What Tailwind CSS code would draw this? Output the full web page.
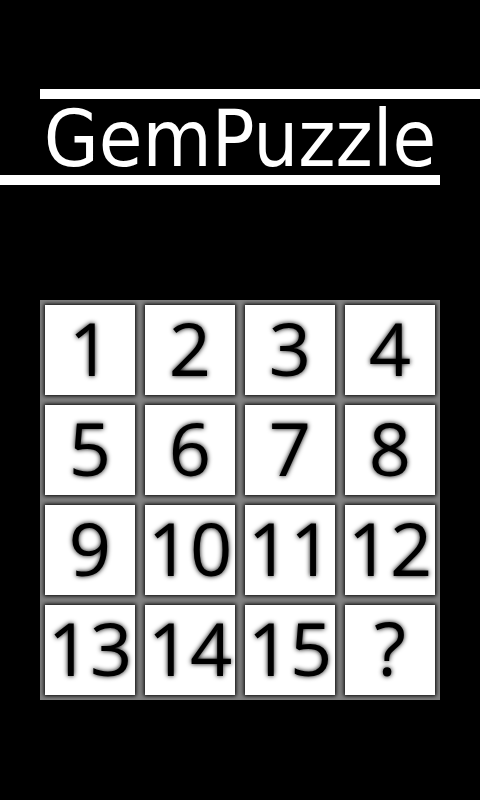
<!DOCTYPE html>
<html lang="en">
<head>
<meta charset="utf-8">
<meta name="viewport" content="width=device-width, initial-scale=1">
<title>GemPuzzle</title>
<script src="https://cdn.jsdelivr.net/npm/@tailwindcss/browser@4"></script>
</head>
<body class="min-h-screen overflow-x-hidden bg-black font-['Open_Sans',sans-serif]">
<header class="flex flex-col pt-[89px]">
  <div class="ml-10 h-[10px] bg-white"></div>
  <h1 class="h-[76px] text-center font-['DejaVu_Sans_Condensed','DejaVu_Sans',sans-serif] text-[79px] leading-[80px] whitespace-nowrap text-white">GemPuzzle</h1>
  <div class="mr-10 h-[10px] bg-white"></div>
</header>
<main class="px-10 pt-[115px] pb-[100px]">
  <div class="grid grid-cols-4 gap-[10px] bg-[#808080] p-[5px] text-[74px] leading-[84px] text-black">
    <button class="flex aspect-square min-w-0 items-center justify-center bg-white pb-[4px] shadow-[0_0_4px_1px_#000] [text-shadow:0_0_5px_#000]">1</button>
    <button class="flex aspect-square min-w-0 items-center justify-center bg-white pb-[4px] shadow-[0_0_4px_1px_#000] [text-shadow:0_0_5px_#000]">2</button>
    <button class="flex aspect-square min-w-0 items-center justify-center bg-white pb-[4px] shadow-[0_0_4px_1px_#000] [text-shadow:0_0_5px_#000]">3</button>
    <button class="flex aspect-square min-w-0 items-center justify-center bg-white pb-[4px] shadow-[0_0_4px_1px_#000] [text-shadow:0_0_5px_#000]">4</button>
    <button class="flex aspect-square min-w-0 items-center justify-center bg-white pb-[4px] shadow-[0_0_4px_1px_#000] [text-shadow:0_0_5px_#000]">5</button>
    <button class="flex aspect-square min-w-0 items-center justify-center bg-white pb-[4px] shadow-[0_0_4px_1px_#000] [text-shadow:0_0_5px_#000]">6</button>
    <button class="flex aspect-square min-w-0 items-center justify-center bg-white pb-[4px] shadow-[0_0_4px_1px_#000] [text-shadow:0_0_5px_#000]">7</button>
    <button class="flex aspect-square min-w-0 items-center justify-center bg-white pb-[4px] shadow-[0_0_4px_1px_#000] [text-shadow:0_0_5px_#000]">8</button>
    <button class="flex aspect-square min-w-0 items-center justify-center bg-white pb-[4px] shadow-[0_0_4px_1px_#000] [text-shadow:0_0_5px_#000]">9</button>
    <button class="flex aspect-square min-w-0 items-center justify-center bg-white pb-[4px] shadow-[0_0_4px_1px_#000] [text-shadow:0_0_5px_#000]">10</button>
    <button class="flex aspect-square min-w-0 items-center justify-center bg-white pb-[4px] shadow-[0_0_4px_1px_#000] [text-shadow:0_0_5px_#000]">11</button>
    <button class="flex aspect-square min-w-0 items-center justify-center bg-white pb-[4px] shadow-[0_0_4px_1px_#000] [text-shadow:0_0_5px_#000]">12</button>
    <button class="flex aspect-square min-w-0 items-center justify-center bg-white pb-[4px] shadow-[0_0_4px_1px_#000] [text-shadow:0_0_5px_#000]">13</button>
    <button class="flex aspect-square min-w-0 items-center justify-center bg-white pb-[4px] shadow-[0_0_4px_1px_#000] [text-shadow:0_0_5px_#000]">14</button>
    <button class="flex aspect-square min-w-0 items-center justify-center bg-white pb-[4px] shadow-[0_0_4px_1px_#000] [text-shadow:0_0_5px_#000]">15</button>
    <button class="flex aspect-square min-w-0 items-center justify-center bg-white pb-[4px] shadow-[0_0_4px_1px_#000] [text-shadow:0_0_5px_#000]">?</button>
  </div>
</main>
</body>
</html>
